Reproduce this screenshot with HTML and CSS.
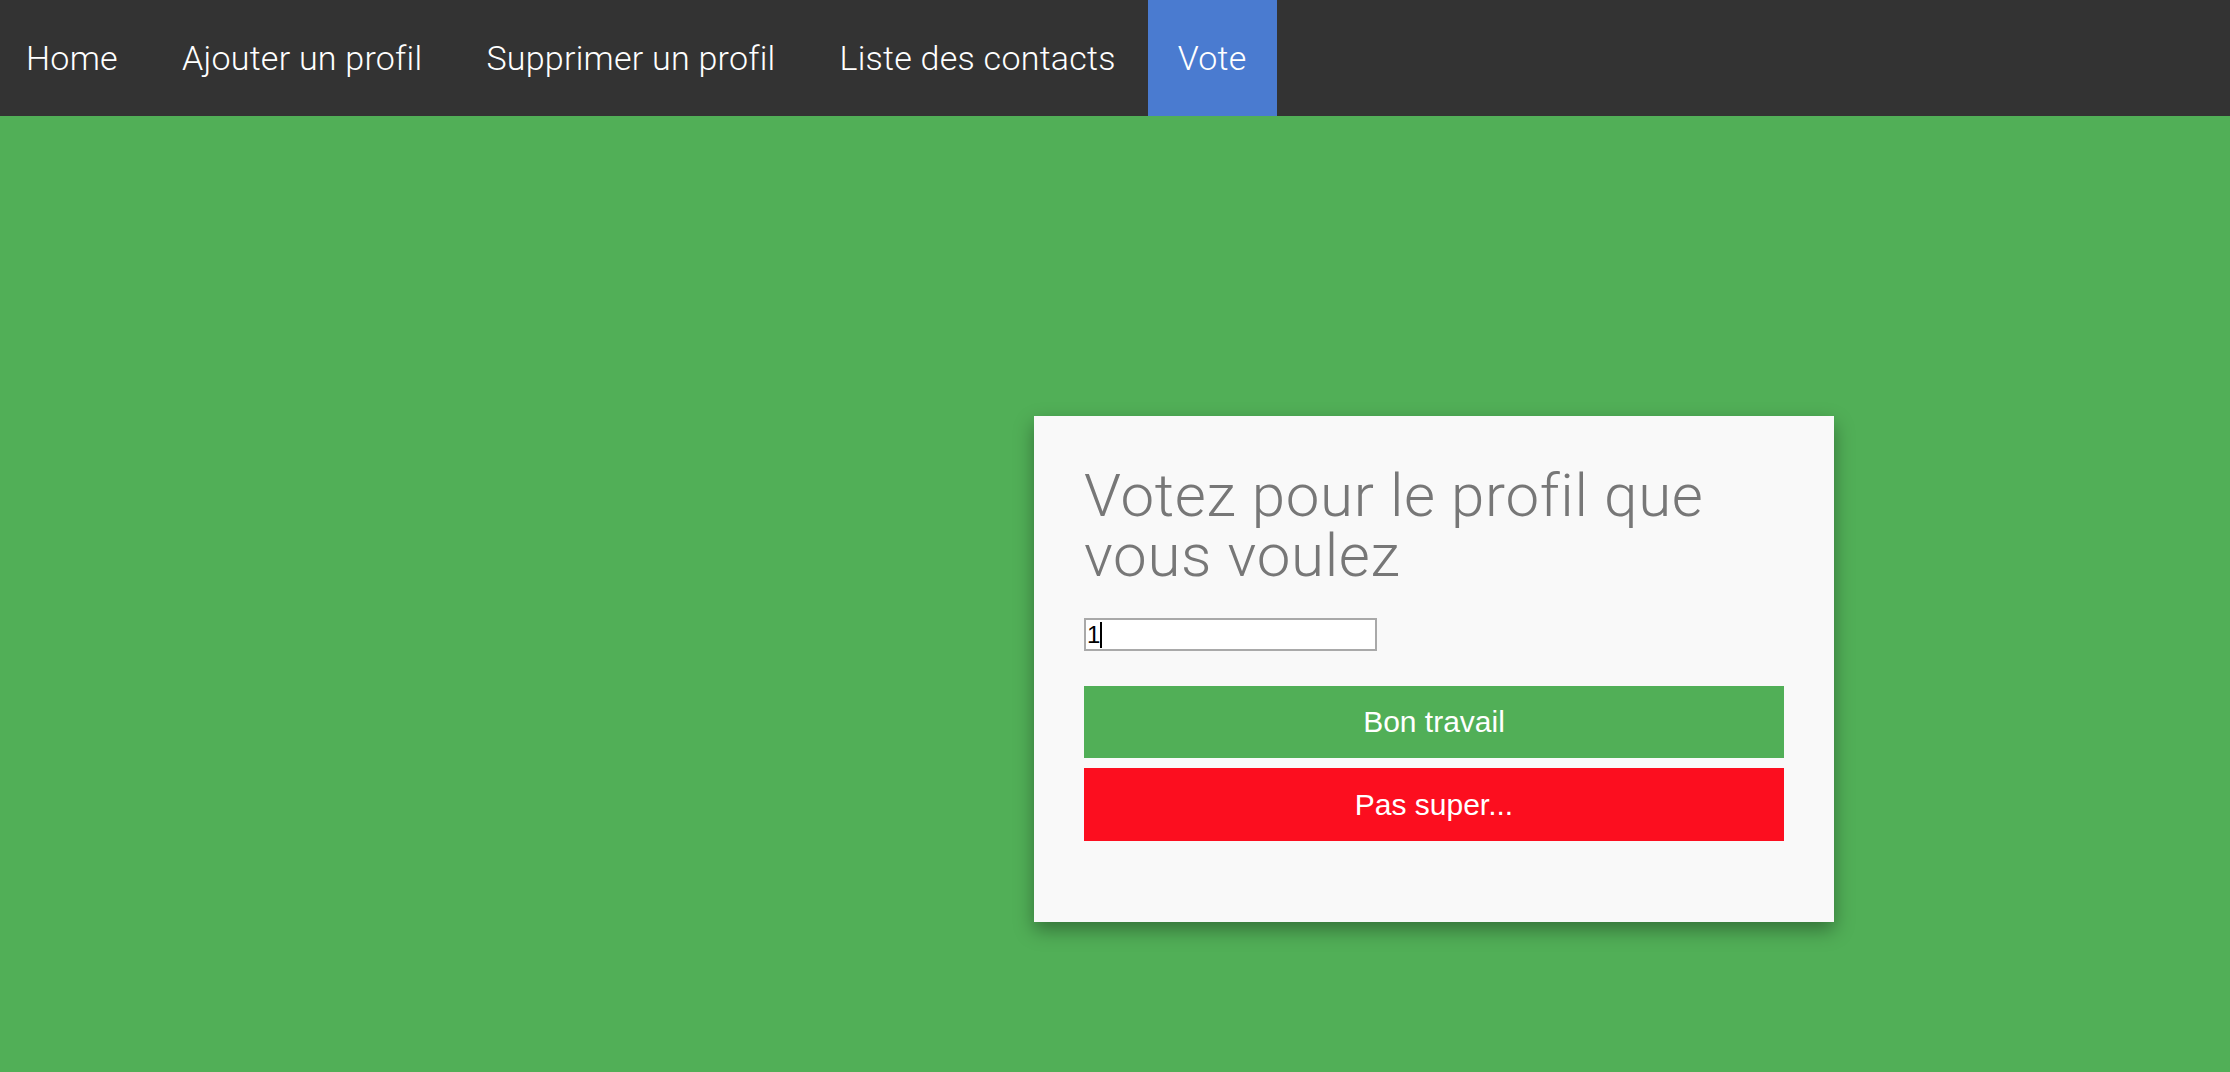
FILE: index.html
```html
<!DOCTYPE html>
<html lang="fr">
<head>
<meta charset="utf-8">
<title>Vote</title>
<link rel="stylesheet" href="styles.css">
</head>
<body>
<nav class="topnav">
  <a class="nav-item nav-first" href="#">Home</a>
  <a class="nav-item" href="#">Ajouter un profil</a>
  <a class="nav-item" href="#">Supprimer un profil</a>
  <a class="nav-item" href="#">Liste des contacts</a>
  <a class="nav-item nav-active" href="#">Vote</a>
</nav>
<main class="page">
  <section class="card">
    <h1 class="card-title">Votez pour le profil que vous voulez</h1>
    <div class="field"><span class="field-input"><span class="field-value">1</span><span class="caret"></span></span></div>
    <button class="btn btn-good">Bon travail</button>
    <button class="btn btn-bad">Pas super...</button>
  </section>
</main>
</body>
</html>
```
FILE: styles.css
```css
html, body {
  margin: 0;
  padding: 0;
}
body {
  background: #51af57;
  min-height: 1072px;
  font-family: Roboto, "Liberation Sans", sans-serif;
}
.topnav {
  display: flex;
  align-items: stretch;
  height: 116px;
  background: #333333;
}
.nav-item {
  display: flex;
  align-items: center;
  padding: 0 32px;
  color: #ffffff;
  text-decoration: none;
  font-family: Roboto, "Liberation Sans", sans-serif;
  font-weight: 300;
  font-size: 34px;
  letter-spacing: 0.25px;
}
.nav-first {
  padding-left: 26px;
}
.nav-active {
  background: #4a7bd0;
  padding: 0 30px;
}
.page {
  padding: 300px 0 0 1034px;
}
.card {
  box-sizing: border-box;
  width: 800px;
  height: 506px;
  padding: 50px 50px 0 50px;
  background: #f9f9f9;
  box-shadow: 0 8px 18px rgba(0, 0, 0, 0.35);
  display: flex;
  flex-direction: column;
  align-items: flex-start;
}
.card-title {
  margin: 0;
  font-family: Roboto, "Liberation Sans", sans-serif;
  font-weight: 300;
  font-size: 60px;
  line-height: 60px;
  letter-spacing: 0.7px;
  color: #777777;
  width: 690px;
}
.field {
  margin-top: 32px;
}
.field-input {
  box-sizing: border-box;
  display: flex;
  align-items: center;
  width: 293px;
  height: 33px;
  border: 2px solid #a9a9a9;
  background: #ffffff;
  padding: 0 1px;
  font-family: "Liberation Sans", sans-serif;
  font-size: 24px;
  color: #000;
}
.caret {
  display: inline-block;
  width: 2px;
  height: 26px;
  background: #000;
}
.btn {
  box-sizing: border-box;
  width: 700px;
  height: 72px;
  border: 0;
  color: #ffffff;
  font-family: "Liberation Sans", sans-serif;
  font-size: 30px;
  padding: 0;
}
.btn-good {
  margin-top: 35px;
  background: #51af57;
}
.btn-bad {
  margin-top: 10px;
  height: 73px;
  background: #fc0e1f;
}
```
